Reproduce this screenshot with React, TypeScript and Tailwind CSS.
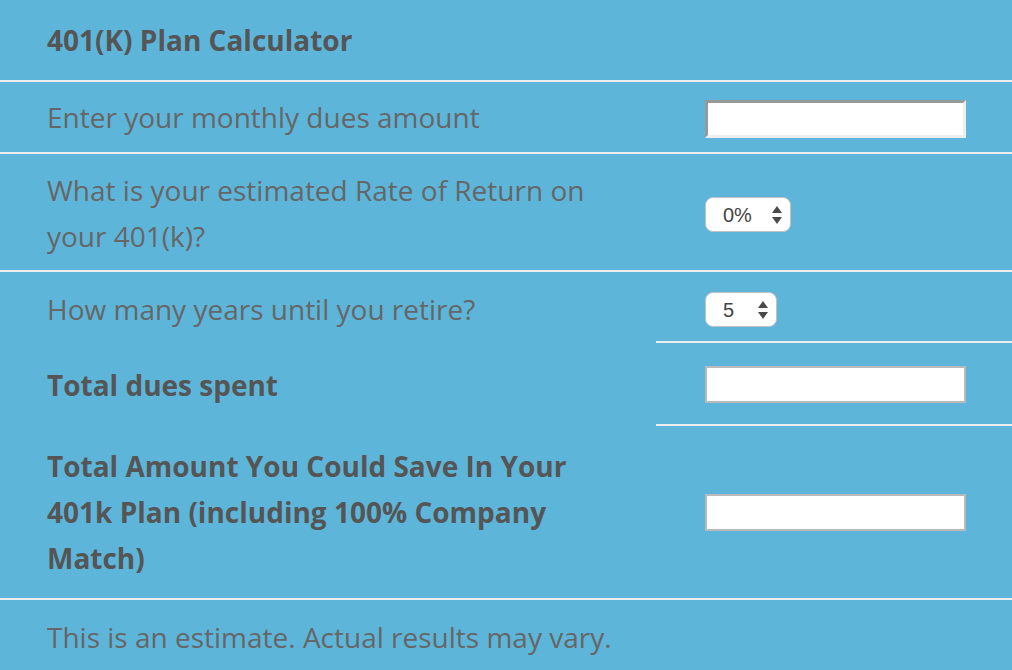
import React from "react";

function Arrows() {
  return (
    <svg width="10" height="18" viewBox="0 0 10 18" className="pointer-events-none absolute right-[9px] top-[9px] block">
      <path d="M5 0 L10 7 L0 7 Z" fill="#4a4a4a" />
      <path d="M0 11 L10 11 L5 18 Z" fill="#4a4a4a" />
    </svg>
  );
}

function Select({ value, options, w }: { value: string; options: string[]; w: string }) {
  return (
    <div className={`relative ${w} h-[35px] leading-[normal]`}>
      <select
        defaultValue={value}
        className="block h-[35px] w-full appearance-none rounded-[8px] border-[1.5px] border-[#c2c2c2] bg-white pl-[17px] py-0 text-[20px] leading-[normal] text-[#444] outline-none"
        style={{ fontFamily: '"Liberation Sans", Arial, sans-serif' }}
      >
        {options.map((o) => (
          <option key={o}>{o}</option>
        ))}
      </select>
      <Arrows />
    </div>
  );
}

export default function App() {
  const font = { fontFamily: '"Open Sans", "Noto Sans", sans-serif' };
  return (
    <div className="w-[1012px] h-[670px] overflow-hidden bg-[#5eb5da] text-[28px] leading-[46px] text-[#666]" style={font}>
      <div className="h-[82px] border-b-2 border-[#eeeeee] pl-[47px] flex items-center">
        <span className="font-bold text-[#555]">401(K) Plan Calculator</span>
      </div>

      <div className="h-[72px] border-b-2 border-[#eeeeee] grid grid-cols-[656px_1fr]">
        <div className="pl-[47px] flex items-center">Enter your monthly dues amount</div>
        <div className="pl-[49px] flex items-center pt-[4px]">
          <input className="block w-[261px] h-[38px] bg-white border-[3px] border-t-[#999] border-l-[#999] border-b-[#eee] border-r-[#eee] outline-none" />
        </div>
      </div>

      <div className="h-[118px] border-b-2 border-[#eeeeee] grid grid-cols-[656px_1fr]">
        <div className="pl-[47px] pr-[49px] flex items-center pt-[2px]">
          What is your estimated Rate of Return on your 401(k)?
        </div>
        <div className="pl-[49px] flex items-center pt-[5px]">
          <Select value="0%" options={["0%", "1%", "2%", "3%", "4%", "5%", "6%", "7%", "8%", "9%", "10%"]} w="w-[86px]" />
        </div>
      </div>

      <div className="grid grid-cols-[656px_1fr]">
        <div className="pl-[47px] h-[71px] flex items-center pt-[2px]">How many years until you retire?</div>
        <div className="pl-[49px] h-[71px] border-b-2 border-[#eeeeee] flex items-center pt-[6px]">
          <Select value="5" options={["5", "10", "15", "20", "25", "30"]} w="w-[72px]" />
        </div>

        <div className="pl-[47px] h-[83px] flex items-center font-bold text-[#555]">Total dues spent</div>
        <div className="pl-[49px] h-[83px] border-b-2 border-[#eeeeee] flex items-center pt-[2px]">
          <input className="block w-[261px] h-[37px] bg-white border-2 border-[#bababa] outline-none" />
        </div>

        <div className="pl-[47px] pr-[49px] h-[174px] border-b-2 border-[#eeeeee] flex items-center font-bold text-[#555]">
          Total Amount You Could Save In Your 401k Plan (including 100% Company Match)
        </div>
        <div className="pl-[49px] h-[174px] border-b-2 border-[#eeeeee] flex items-center">
          <input className="block w-[261px] h-[37px] bg-white border-2 border-[#bababa] outline-none" />
        </div>
      </div>

      <div className="h-[70px] pl-[47px] flex items-center pt-[4px]">
        This is an estimate. Actual results may vary.
      </div>
    </div>
  );
}
